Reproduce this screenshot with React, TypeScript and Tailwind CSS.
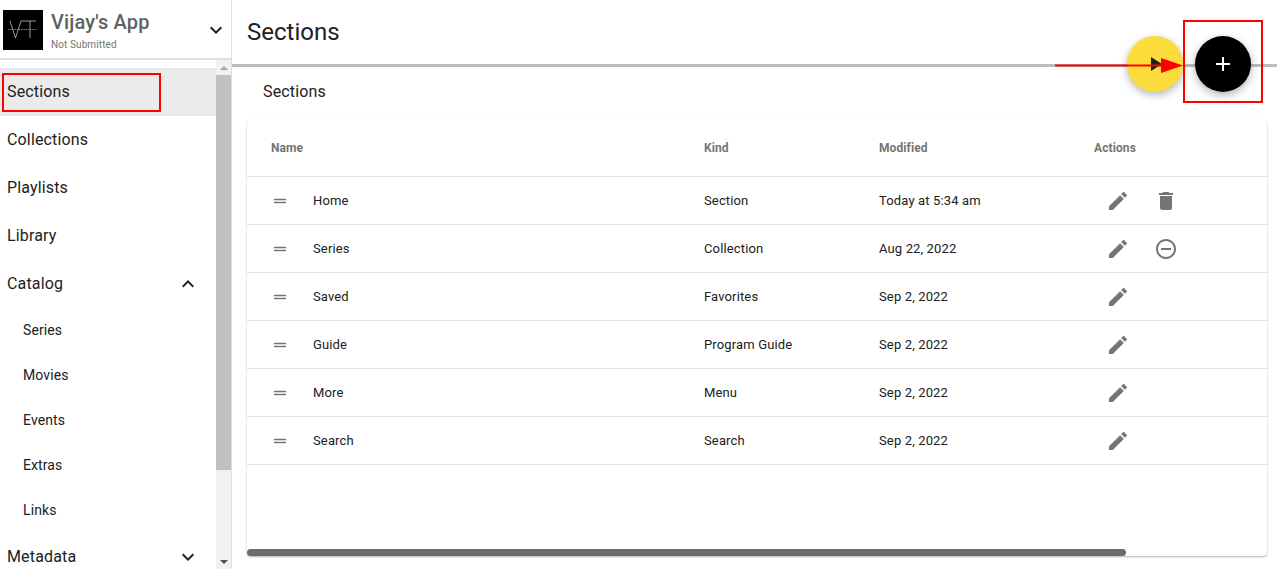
const EDIT = "M3 17.25V21h3.75L17.81 9.94l-3.75-3.75L3 17.25zM20.71 7.04c.39-.39.39-1.02 0-1.41l-2.34-2.34a.9959.9959 0 0 0-1.41 0l-1.83 1.83 3.75 3.75 1.83-1.83z";
const TRASH = "M6 19c0 1.1.9 2 2 2h8c1.1 0 2-.9 2-2V7H6v12zM19 4h-3.5l-1-1h-5l-1 1H5v2h14V4z";
const REMOVE = "M7 11v2h10v-2H7zm5-9C6.48 2 2 6.48 2 12s4.48 10 10 10 10-4.48 10-10S17.52 2 12 2zm0 18c-4.41 0-8-3.59-8-8s3.59-8 8-8 8 3.59 8 8-3.59 8-8 8z";
const DRAG = "M20 9H4v2h16V9zM4 15h16v-2H4v2z";
const MORE = "M16.59 8.59 12 13.17 7.41 8.59 6 10l6 6 6-6z";
const LESS = "m12 8-6 6 1.41 1.41L12 10.83l4.59 4.58L18 14z";
const ADD = "M19 13h-6v6h-2v-6H5v-2h6V5h2v6h6v2z";
const PLAY = "M8 5v14l11-7z";

function Icon({ d, className }: { d: string; className?: string }) {
  return (
    <svg viewBox="0 0 24 24" fill="currentColor" className={className}>
      <path d={d} />
    </svg>
  );
}

const rows = [
  { name: "Home", kind: "Section", modified: "Today at 5:34 am", extra: TRASH },
  { name: "Series", kind: "Collection", modified: "Aug 22, 2022", extra: REMOVE },
  { name: "Saved", kind: "Favorites", modified: "Sep 2, 2022" },
  { name: "Guide", kind: "Program Guide", modified: "Sep 2, 2022" },
  { name: "More", kind: "Menu", modified: "Sep 2, 2022" },
  { name: "Search", kind: "Search", modified: "Sep 2, 2022" },
];

function NavItem({ label, active, icon }: { label: string; active?: boolean; icon?: string }) {
  return (
    <div className={`flex h-12 shrink-0 items-center justify-between pl-[7px] pr-4 text-base tracking-[0.15px] text-[#212121] ${active ? "bg-[#ebebeb]" : ""}`}>
      <span>{label}</span>
      {icon && <Icon d={icon} className="h-6 w-6 text-[#212121]" />}
    </div>
  );
}

function SubItem({ label }: { label: string }) {
  return <div className="flex h-[45px] shrink-0 items-center pl-[23px] text-sm tracking-[0.1px] text-[#212121]">{label}</div>;
}

function Sidebar() {
  return (
    <aside className="flex h-full w-[232px] shrink-0 flex-col border-r border-[#e0e0e0]">
      <div className="flex h-[60px] shrink-0 items-center border-b-2 border-[#e0e0e0] pt-px pl-[3px] pr-[3px]">
        <div className="h-10 w-10 shrink-0 bg-black">
          <svg viewBox="0 0 40 40" className="h-10 w-10" fill="none" stroke="#d8d8d8" strokeWidth="0.7">
            <path d="M7 11 12.5 28 18 11H33M27 11V28" />
            <path d="M5 19.5H34" stroke="#777" strokeWidth="1.2" strokeDasharray="1.5 0.7" />
          </svg>
        </div>
        <div className="ml-2 flex min-w-0 flex-1 flex-col pt-[2px]">
          <span className="text-xl leading-[26px] font-medium tracking-[0.15px] text-[#616161]">Vijay's App</span>
          <span className="mt-[3px] text-[10px] leading-[14px] tracking-[0.1px] text-[#757575]">Not Submitted</span>
        </div>
        <Icon d={MORE} className="h-6 w-6 text-[#212121]" />
      </div>
      <div className="flex min-h-0 flex-1">
        <nav className="flex min-w-0 flex-1 flex-col overflow-hidden pt-2">
          <NavItem label="Sections" active />
          <NavItem label="Collections" />
          <NavItem label="Playlists" />
          <NavItem label="Library" />
          <NavItem label="Catalog" icon={LESS} />
          <div className="-mt-px mb-px flex flex-col">
            <SubItem label="Series" />
            <SubItem label="Movies" />
            <SubItem label="Events" />
            <SubItem label="Extras" />
            <SubItem label="Links" />
          </div>
          <NavItem label="Metadata" icon={MORE} />
        </nav>
        <div className="flex w-[15px] shrink-0 flex-col bg-[#f1f1f1]">
          <div className="flex h-[15px] shrink-0 items-center justify-center">
            <div className="h-0 w-0 border-x-[4px] border-b-[4px] border-x-transparent border-b-[#a3a3a3]" />
          </div>
          <div className="h-[395px] shrink-0 bg-[#c1c1c1]" />
          <div className="flex-1" />
          <div className="flex h-[15px] shrink-0 items-center justify-center">
            <div className="h-0 w-0 border-x-[4px] border-t-[4px] border-x-transparent border-t-[#505050]" />
          </div>
        </div>
      </div>
    </aside>
  );
}

function SectionsTable() {
  return (
    <div className="relative flex h-[436px] flex-col rounded-sm bg-white shadow-[0_1px_2px_rgba(0,0,0,0.3)]">
      <div className="flex h-[57px] shrink-0 items-center border-b border-[#e0e0e0] text-xs font-bold tracking-[0.1px] text-[#757575]">
        <div className="w-[457px] pl-6">Name</div>
        <div className="w-[175px]">Kind</div>
        <div className="w-[215px]">Modified</div>
        <div>Actions</div>
      </div>
      {rows.map((row) => (
        <div key={row.name} className="flex h-12 shrink-0 items-center border-b border-[#e0e0e0] text-[13px] tracking-[0.14px] text-[#212121]">
          <div className="flex w-[457px] items-center pl-[24px]">
            <Icon d={DRAG} className="h-[18px] w-[18px] text-[#757575]" />
            <span className="ml-6">{row.name}</span>
          </div>
          <div className="w-[175px]">{row.kind}</div>
          <div className="w-[227px]">{row.modified}</div>
          <div className="flex gap-6">
            <Icon d={EDIT} className="h-6 w-6 text-[#757575]" />
            {row.extra && <Icon d={row.extra} className="h-6 w-6 text-[#757575]" />}
          </div>
        </div>
      ))}
      <div className="absolute right-[141px] bottom-0 left-0 h-[7px] rounded-full bg-[#6b6b6b]" />
    </div>
  );
}

export default function App() {
  return (
    <div className="relative flex h-[569px] w-[1277px] overflow-hidden bg-white font-['Roboto',sans-serif]">
      <Sidebar />
      <main className="flex min-w-0 flex-1 flex-col">
        <div className="flex h-[67px] shrink-0 items-center border-b-[3px] border-[#bdbdbd] pl-[15px]">
          <h1 className="text-2xl font-normal text-[#212121]">Sections</h1>
        </div>
        <div className="flex h-[53px] shrink-0 items-center pb-[3px] pl-[31px] text-base tracking-[0.15px] text-[#212121]">Sections</div>
        <div className="ml-[15px] mr-[10px]">
          <SectionsTable />
        </div>
      </main>

      {/* FABs */}
      <div className="absolute top-[36px] left-[1127px] flex h-14 w-14 items-center justify-center rounded-full bg-[#fbdc3b] shadow-[0_3px_8px_rgba(0,0,0,0.3)]">
        <Icon d={PLAY} className="h-6 w-6 text-[#212121]" />
      </div>
      <div className="absolute top-[36px] left-[1195px] flex h-14 w-14 items-center justify-center rounded-full bg-black text-white shadow-[0_3px_8px_rgba(0,0,0,0.3)]">
        <Icon d={ADD} className="h-6 w-6" />
      </div>

      {/* Red annotations */}
      <div className="absolute top-[73px] left-[2px] h-[39px] w-[159px] border-2 border-[#ff0000]" />
      <div className="absolute top-[20px] left-[1183px] h-[83px] w-[80px] border-2 border-[#ff0000]" />
      <svg className="absolute top-[50px] left-[1050px] h-[30px] w-[140px]" viewBox="0 0 140 30">
        <path d="M5 15.5H115" stroke="#ff0000" strokeWidth="2" />
        <path d="M111 8 133 15.5 111 23Z" fill="#ff0000" />
      </svg>
    </div>
  );
}
